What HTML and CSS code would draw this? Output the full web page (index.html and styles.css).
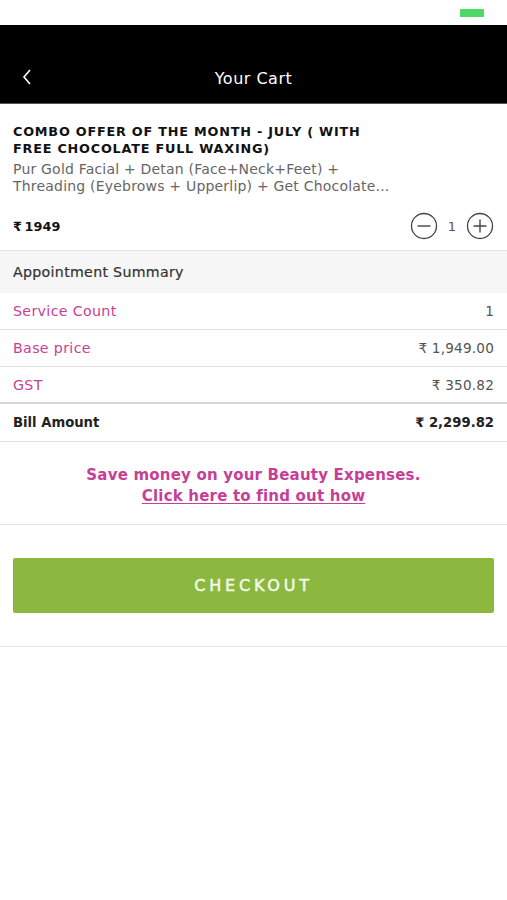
FILE: index.html
```html
<!DOCTYPE html>
<html>
<head>
<meta charset="utf-8">
<link rel="stylesheet" href="styles.css">
</head>
<body>
<div class="status"><span class="battery"></span></div>
<header class="nav">
  <svg class="back" width="12" height="18" viewBox="0 0 12 18"><path d="M9 2 L3 9 L9 16" fill="none" stroke="#fff" stroke-width="1.6"/></svg>
  <div class="nav-title">Your Cart</div>
</header>
<section class="item">
  <div class="item-title">COMBO OFFER OF THE MONTH - JULY ( WITH<br>FREE CHOCOLATE FULL WAXING)</div>
  <div class="item-desc">Pur Gold Facial + Detan (Face+Neck+Feet) +<br>Threading (Eyebrows + Upperlip) + Get Chocolate...</div>
  <div class="item-row">
    <div class="price">₹ 1949</div>
    <div class="qty">
      <svg width="28" height="28" viewBox="0 0 28 28"><circle cx="14" cy="14" r="12.5" fill="none" stroke="#444" stroke-width="1.3"/><path d="M7.5 14 H20.5" stroke="#444" stroke-width="1.4"/></svg>
      <span class="qty-num">1</span>
      <svg width="28" height="28" viewBox="0 0 28 28"><circle cx="14" cy="14" r="12.5" fill="none" stroke="#444" stroke-width="1.3"/><path d="M7.5 14 H20.5 M14 7.5 V20.5" stroke="#444" stroke-width="1.4"/></svg>
    </div>
  </div>
</section>
<div class="summary-head">Appointment Summary</div>
<div class="row"><span class="label">Service Count</span><span class="val">1</span></div>
<div class="row"><span class="label">Base price</span><span class="val">₹ 1,949.00</span></div>
<div class="row row-last"><span class="label">GST</span><span class="val">₹ 350.82</span></div>
<div class="row bill"><span>Bill Amount</span><span>₹ 2,299.82</span></div>
<div class="promo">
  <div>Save money on your Beauty Expenses.</div>
  <a class="promo-link">Click here to find out how</a>
</div>
<div class="checkout-wrap">
  <button class="checkout">CHECKOUT</button>
</div>
</body>
</html>
```
FILE: styles.css
```css
* { box-sizing: border-box; }
body {
  margin: 0;
  background: #fff;
  font-family: "DejaVu Sans", "Open Sans", sans-serif;
  color: #222;
  width: 507px;
}
.status {
  height: 25px;
  display: flex;
  justify-content: flex-end;
  align-items: flex-start;
  padding: 9px 23px 0 0;
}
.battery {
  width: 24px;
  height: 8px;
  background: #4cd964;
  border-radius: 1px;
}
.nav {
  height: 79px;
  background: #000;
  border-bottom: 1px solid #555;
  display: flex;
  align-items: flex-end;
  padding: 0 0 17px 0;
  position: relative;
}
.back {
  margin-left: 21px;
}
.nav-title {
  position: absolute;
  left: 0; right: 0;
  bottom: 15px;
  text-align: center;
  color: #fff;
  font-size: 16px;
  letter-spacing: 0.5px;
}
.item {
  padding: 19px 13px 0 13px;
  border-bottom: 1px solid #e3e3e3;
  height: 147px;
}
.item-title {
  font-weight: 700;
  font-size: 12.8px;
  line-height: 17px;
  letter-spacing: 0.78px;
  color: #111;
}
.item-desc {
  margin-top: 4px;
  font-size: 14px;
  line-height: 16.5px;
  color: #666;
  letter-spacing: 0.2px;
}
.item-row {
  margin-top: 18px;
  display: flex;
  justify-content: space-between;
  align-items: center;
}
.price {
  font-weight: 700;
  font-size: 12.8px;
  color: #111;
  letter-spacing: 0.1px;
  word-spacing: -2px;
}
.qty {
  display: flex;
  align-items: center;
  gap: 10px;
  margin-right: 0;
}
.qty-num {
  font-size: 13px;
  color: #555;
}
.summary-head {
  background: #f6f6f6;
  height: 42px;
  display: flex;
  align-items: center;
  padding: 0 13px;
  font-size: 14.2px;
  color: #333;
  letter-spacing: 0.3px;
  -webkit-text-stroke: 0.2px #333;
}
.row {
  height: 37px;
  display: flex;
  justify-content: space-between;
  align-items: center;
  padding: 0 13px;
  border-bottom: 1px solid #e2e2e2;
  font-size: 13.6px;
  letter-spacing: 0.2px;
}
.row:first-of-type { height: 34px; }
.row-last { border-bottom: 2px solid #d6d6d6; }
.label { color: #c63f97; font-size: 14.2px; letter-spacing: 0.35px; }
.val { color: #555; }
.bill {
  font-weight: 700;
  color: #222;
  height: 38px;
  font-size: 13.2px;
  letter-spacing: 0px;
}
.promo {
  height: 83px;
  border-bottom: 1px solid #e3e3e3;
  display: flex;
  flex-direction: column;
  align-items: center;
  justify-content: center;
  padding-top: 6px;
  color: #c63f97;
  font-weight: 700;
  font-size: 15px;
  line-height: 21px;
  letter-spacing: 0.2px;
}
.promo-link {
  color: #c63f97;
  text-decoration: underline;
  text-underline-offset: 2px;
}
.checkout-wrap {
  padding: 33px 13px 33px 13px;
  border-bottom: 1px solid #e8e8e8;
}
.checkout {
  display: block;
  width: 100%;
  height: 55px;
  background: #8cb83f;
  border: none;
  border-radius: 2px;
  color: #f4f8ec;
  font-family: "DejaVu Sans", "Open Sans", sans-serif;
  font-size: 16px;
  font-weight: 400;
  letter-spacing: 3.8px;
  -webkit-text-stroke: 0.5px #f4f8ec;
}
```
